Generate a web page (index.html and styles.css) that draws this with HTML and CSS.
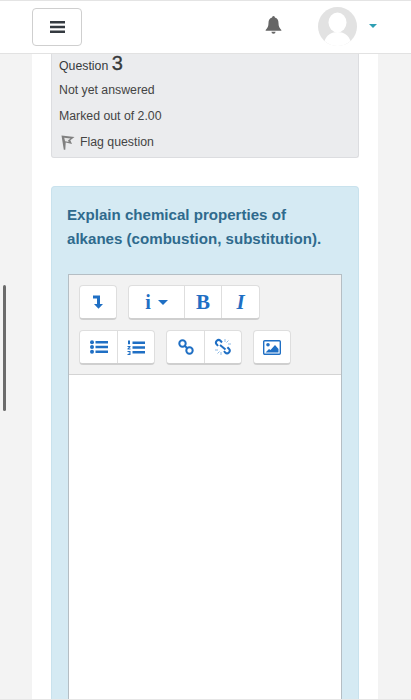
FILE: index.html
```html
<!DOCTYPE html>
<html lang="en">
  <head>
    <meta charset="UTF-8" />
    <meta name="viewport" content="width=device-width, initial-scale=1.0" />
    <title>Question 3</title>
    <link rel="stylesheet" href="styles.css">
  </head>
  <body>
    <nav class="navbar">
      <button class="menu-btn" type="button" aria-label="Menu">
        <svg width="15" height="12" viewBox="0 0 15 12"><path d="M0 0h15v2.600H0zM0 4.700h15v2.600H0zM0 9.400h15V12H0z" fill="#343a40"/></svg>
      </button>
      <div class="nav-right">
        <svg class="bell" width="17" height="18" viewBox="0 0 18 19"><path d="M9 0a1.500 1.500 0 0 1 1.500 1.600C13.200 2.300 14.300 4.500 14.300 7.500c0 3.500 1 5.300 3 7.200v1H.7v-1c2-1.900 3-3.700 3-7.200 0-3 1.100-5.200 3.800-5.900A1.500 1.500 0 0 1 9 0zM6.800 16.600h4.400a2.200 2.200 0 0 1-4.400 0z" fill="#666"/></svg>
        <svg class="avatar" width="39" height="39" viewBox="0 0 39 39">
          <circle cx="19.500" cy="19.500" r="19.500" fill="#e2e2e2"/>
          <ellipse cx="19.500" cy="15.500" rx="9" ry="10" fill="#fff"/>
          <path d="M6.500 34c2-6 7-9 13-9s11 3 13 9a19.500 19.500 0 0 1-26 0z" fill="#fff"/>
        </svg>
        <span class="caret"></span>
      </div>
    </nav>
    <div class="scrollbar"></div>
    <main class="page">
      <section class="info">
        <h3 class="qno">Question <span>3</span></h3>
        <p>Not yet answered</p>
        <p>Marked out of 2.00</p>
        <p class="flag">
          <svg width="14" height="15" viewBox="0 0 14 15"><path d="M.5.500l13 1.500-4.200 3.200 1.700 3.800-6.300-1.600L4.300 14.800H2.800z" fill="#808080"/><path d="M3.200 2.800l6.300.8-2.500 1.900.7 1.600-3.600-.9z" fill="#e4e4e4"/></svg>
          Flag question
        </p>
      </section>
      <section class="content">
        <p class="qtext">Explain chemical properties of alkanes (combustion, substitution).</p>
        <div class="editor">
          <div class="toolbar">
            <div class="tool-row">
              <div class="group">
                <span class="tool">
                  <svg width="12" height="14" viewBox="0 0 12 14"><path d="M1 .5h7v8.500h3L6.500 13.800 2 9h3V3.500H1z" fill="#1f6fc4"/></svg>
                </span>
              </div>
              <div class="group">
                <span class="tool tool-wide">
                  <b class="info-i">i</b><span class="mini-caret"></span>
                </span>
                <span class="tool letter bold">B</span>
                <span class="tool letter ital">I</span>
              </div>
            </div>
            <div class="tool-row">
              <div class="group">
                <span class="tool">
                  <svg width="18" height="14" viewBox="0 0 18 14"><path d="M5.500 1h12.500v2.600H5.500zM5.500 5.700h12.500v2.600H5.500zM5.500 10.400h12.500V13H5.500z" fill="#1f6fc4"/><circle cx="2" cy="2.300" r="2" fill="#1f6fc4"/><circle cx="2" cy="7" r="2" fill="#1f6fc4"/><circle cx="2" cy="11.700" r="2" fill="#1f6fc4"/></svg>
                </span>
                <span class="tool">
                  <svg width="18" height="15" viewBox="0 0 18 15"><path d="M5.500 1.500h12.500v2.600H5.500zM5.500 6.200h12.500v2.600H5.500zM5.500 10.900h12.500v2.600H5.500z" fill="#1f6fc4"/><path d="M1 .5h2v3.800H1zM.5 6h3v1L2 8.500h1.500v1h-3v-1L2 7H.5zM.5 11h3v4h-3v-1h2v-.5h-1v-.8h1V12h-2z" fill="#1f6fc4"/></svg>
                </span>
              </div>
              <div class="group">
                <span class="tool">
                  <svg width="16" height="16" viewBox="0 0 16 16" fill="none" stroke="#1f6fc4" stroke-width="2"><circle cx="4.500" cy="4.500" r="3.200"/><circle cx="11.500" cy="11.500" r="3.200"/><path d="M6.500 6.500l3 3"/></svg>
                </span>
                <span class="tool">
                  <svg width="18" height="18" viewBox="0 0 18 18" fill="none"><path d="M4 8 2.800 6.500a2.600 2.600 0 0 1 3.700-3.700L8 4.500M10 13l1.200 1.500a2.600 2.600 0 0 0 3.700-3.700L13.400 9.300" stroke="#1f6fc4" stroke-width="2"/><path d="M6 7l5.500 4.500" stroke="#1f6fc4" stroke-width="2"/><path d="M11 1v3M14.500 2.500l-2 2M17 6h-3M1 12h3M3.500 15.500l2-2M7 17v-3" stroke="#8fbbe6" stroke-width="1"/></svg>
                </span>
              </div>
              <div class="group">
                <span class="tool">
                  <svg width="18" height="15" viewBox="0 0 18 15"><rect x=".7" y=".7" width="16.600" height="13.600" rx="1" fill="#fff" stroke="#1f6fc4" stroke-width="1.400"/><circle cx="5" cy="4.800" r="1.800" fill="#1f6fc4"/><path d="M2.500 12.500 6 9l1.500 1L12 5l3.500 4v3.500z" fill="#1f6fc4"/></svg>
                </span>
              </div>
            </div>
          </div>
          <div class="edit-area"></div>
        </div>
      </section>
    </main>
  </body>
</html>
```

FILE: styles.css
```css
* {
  margin: 0;
  padding: 0;
  box-sizing: border-box;
}

html,
body {
  height: 700px;
  overflow: hidden;
}

body {
  background-color: #f3f3f3;
  border-bottom: 1px solid #e6e6e6;
  color: #373a3c;
  font-family: "Liberation Sans", Arial, sans-serif;
  font-size: 12.3px;
  position: relative;
}

.navbar {
  height: 54px;
  background-color: #fff;
  border-top: 1px solid #e4e4e4;
  border-bottom: 1px solid #e2e2e2;
  display: flex;
  justify-content: space-between;
  align-items: center;
  padding: 0 32px;
}

.menu-btn {
  width: 50px;
  height: 38px;
  margin-top: -1px;
  background: #fff;
  border: 1px solid #cfcfcf;
  border-radius: 4px;
  display: flex;
  justify-content: center;
  align-items: center;
}

.nav-right {
  display: flex;
  align-items: center;
  margin-right: 2px;
  margin-top: -2px;
}

.bell {
  margin-right: 36px;
  margin-bottom: 3px;
}

.avatar {
  margin-right: 12px;
}

.caret {
  width: 0;
  height: 0;
  border-left: 4px solid transparent;
  border-right: 4px solid transparent;
  border-top: 4px solid #2f9fb3;
}

.scrollbar {
  position: absolute;
  left: 3px;
  top: 285px;
  width: 3px;
  height: 126px;
  background-color: #6b6b6b;
  border-radius: 2px;
}

.page {
  width: 346px;
  height: 645px;
  margin-left: 32px;
  padding: 0 19px;
  background-color: #fff;
}

.info {
  height: 104px;
  background-color: #ebecee;
  border: 1px solid #dcdde0;
  border-top: none;
  border-radius: 0 0 3px 3px;
  padding: 0 7px;
}

.info p {
  margin-top: 10px;
  line-height: 16px;
  color: #444;
}

.qno {
  font-size: 12.3px;
  font-weight: normal;
  line-height: 18px;
  height: 18px;
}

.qno span {
  font-size: 20px;
  -webkit-text-stroke: 0.3px #373a3c;
}

.flag {
  display: flex;
  align-items: center;
  gap: 5px;
  padding-left: 2px;
}

.content {
  margin-top: 28px;
  height: 513px;
  padding: 18px 16px 0 15px;
  background-color: #d5eaf3;
  border: 1px solid #c9e2ed;
  border-bottom: none;
  border-radius: 4px 4px 0 0;
}

.qtext {
  color: #2f6a8d;
  font-size: 15.1px;
  font-weight: bold;
  line-height: 24px;
  margin-top: -2px;
}

.editor {
  margin-top: 23px;
  margin-left: 1px;
  height: 425px;
  border: 1px solid #b5bec4;
  border-bottom: none;
  background-color: #fff;
}

.toolbar {
  height: 100px;
  background-color: #f2f2f2;
  border-bottom: 1px solid #d4d4d4;
  padding: 10px 10px 0;
  display: flex;
  flex-direction: column;
  gap: 10px;
}

.tool-row {
  display: flex;
  gap: 11px;
}

.group {
  display: flex;
  height: 35px;
  background-color: #fff;
  border: 1px solid #dedede;
  border-bottom: 2px solid #cfcfcf;
  border-radius: 4px;
}

.tool {
  width: 37px;
  display: flex;
  justify-content: center;
  align-items: center;
  color: #1f6fc4;
}

.tool:only-child {
  width: 36px;
}

.tool + .tool {
  border-left: 1px solid #dedede;
}

.tool-wide {
  width: 55px;
  gap: 7px;
}

.letter {
  font-family: "Liberation Serif", "Times New Roman", serif;
  font-size: 21px;
  font-weight: bold;
}

.ital {
  font-style: italic;
  width: 38px;
}

.info-i {
  font-family: "Liberation Serif", "Times New Roman", serif;
  font-size: 20px;
}

.mini-caret {
  width: 0;
  height: 0;
  border-left: 5px solid transparent;
  border-right: 5px solid transparent;
  border-top: 5px solid #1f6fc4;
}

.edit-area {
  height: 324px;
}
```
